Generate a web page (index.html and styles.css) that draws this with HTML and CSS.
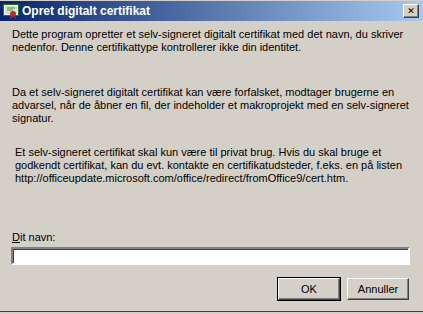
FILE: index.html
```html
<!DOCTYPE html>
<html lang="da">
<head>
    <meta charset="UTF-8">
    <title>Opret digitalt certifikat</title>
    <link rel="stylesheet" href="styles.css">
</head>
<body>
    <div class="window">
        <!-- Title bar -->
        <div class="titlebar">
            <svg class="title-icon" width="16" height="16" viewBox="0 0 16 16">
                <rect x="0.5" y="1.5" width="15" height="11" fill="#f4f4f0" stroke="#2f6b2f"/>
                <rect x="2" y="3" width="12" height="8" fill="#cfe8c8"/>
                <line x1="4" y1="5" x2="12" y2="5" stroke="#4a8a4a"/>
                <line x1="4" y1="7" x2="10" y2="7" stroke="#4a8a4a"/>
                <circle cx="10" cy="11" r="3" fill="#c0282c"/>
                <path d="M8 13 L7 16 L9 15 Z M12 13 L13 16 L11 15 Z" fill="#c0282c"/>
            </svg>
            <span class="title-text">Opret digitalt certifikat</span>
            <button class="close-btn">&#x2715;</button>
        </div>

        <!-- Dialog body -->
        <div class="content">
            <p class="para">Dette program opretter et selv-signeret digitalt certifikat med det navn, du skriver<br>nedenfor. Denne certifikattype kontrollerer ikke din identitet.</p>
            <p class="para second">Da et selv-signeret digitalt certifikat kan være forfalsket, modtager brugerne en<br>advarsel, når de åbner en fil, der indeholder et makroprojekt med en selv-signeret<br>signatur.</p>
            <p class="para third">Et selv-signeret certifikat skal kun være til privat brug. Hvis du skal bruge et<br>godkendt certifikat, kan du evt. kontakte en certifikatudsteder, f.eks. en på listen<br>http://officeupdate.microsoft.com/office/redirect/fromOffice9/cert.htm.</p>

            <label class="name-label"><u>D</u>it navn:</label>
            <input class="name-input" type="text">

            <div class="buttons">
                <button class="btn default">OK</button>
                <button class="btn">Annuller</button>
            </div>
        </div>
    </div>
</body>
</html>
```
FILE: styles.css
```css
body {
    margin: 0;
    padding: 0;
    background: #d4d0c8;
    font-family: Tahoma, 'Liberation Sans', Arial, sans-serif;
    font-size: 11px;
    color: #000;
    overflow: hidden;
}
.window {
    width: 423px;
    height: 312px;
    background: #d4d0c8;
    border-bottom: 1px solid #404040;
    box-sizing: border-box;
    display: flex;
    flex-direction: column;
}
.titlebar {
    height: 20px;
    margin-top: 1px;
    padding: 0 4px 0 3px;
    background: linear-gradient(to right, #0a246a, #a6caf0);
    display: flex;
    align-items: center;
}
.title-icon {
    flex: none;
}
.title-text {
    margin-left: 3px;
    color: #fff;
    font-weight: bold;
    font-size: 12px;
    flex: 1;
}
.close-btn {
    width: 16px;
    height: 14px;
    padding: 0;
    background: #d4d0c8;
    border: 1px solid;
    border-color: #fff #404040 #404040 #fff;
    box-shadow: inset -1px -1px 0 #808080;
    font-size: 9px;
    font-weight: bold;
    line-height: 11px;
    font-family: 'DejaVu Sans', sans-serif;
    color: #000;
}
.content {
    padding: 7px 12px 0 12px;
    flex: 1;
    display: flex;
    flex-direction: column;
}
.para {
    margin: 0;
    line-height: 13px;
    white-space: nowrap;
}
.second {
    margin-top: 32px;
}
.third {
    margin-top: 21px;
    padding-left: 3px;
}
.name-label {
    margin-top: 46px;
    line-height: 13px;
}
.name-input {
    margin: 3px 0 0 -1px;
    width: 399px;
    height: 18px;
    box-sizing: border-box;
    background: #fff;
    border: 2px solid;
    border-color: #808080 #fff #fff #808080;
    box-shadow: inset 1px 1px 0 #404040;
    outline: none;
}
.buttons {
    display: flex;
    justify-content: flex-end;
    gap: 7px;
    margin-top: 13px;
    padding-right: 2px;
}
.btn {
    width: 62px;
    height: 22px;
    padding: 0;
    font-family: inherit;
    font-size: 11px;
    background: #d4d0c8;
    border: 1px solid;
    border-color: #fff #404040 #404040 #fff;
    box-shadow: inset -1px -1px 0 #808080;
    color: #000;
}
.btn.default {
    outline: 1px solid #000;
}
```
